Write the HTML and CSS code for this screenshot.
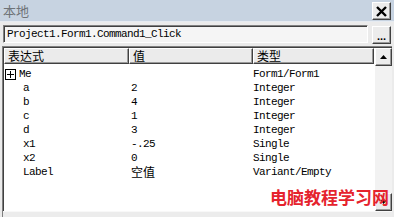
FILE: index.html
```html
<!DOCTYPE html>
<html>
<head>
<meta charset="utf-8">
<link rel="stylesheet" href="styles.css">
</head>
<body>
<div class="window">
  <div class="titlebar">
    <span class="title">本地</span>
    <span class="closebtn">
      <svg width="11" height="11" viewBox="0 0 11 11"><path d="M1 1 L10 10 M10 1 L1 10" stroke="#000" stroke-width="2.4" fill="none"/></svg>
    </span>
  </div>
  <div class="pathrow">
    <div class="pathbox mono">Project1.Form1.Command1_Click</div>
    <div class="dotbtn">...</div>
  </div>
  <div class="grid">
    <div class="gridmain">
      <div class="list">
        <div class="header">
          <div class="hcell c1">表达式</div>
          <div class="hcell c2">值</div>
          <div class="hcell c3">类型</div>
        </div>
        <div class="row mono">
          <div class="cell c1 top"><span class="plus"><svg width="11" height="11" viewBox="0 0 11 11"><rect x="0.5" y="0.5" width="10" height="10" fill="#fff" stroke="#000"/><path d="M2 5.5 H9 M5.5 2 V9" stroke="#000"/></svg></span>Me</div>
          <div class="cell c2"></div>
          <div class="cell c3">Form1/Form1</div>
        </div>
        <div class="row mono"><div class="cell c1 child">a</div><div class="cell c2">2</div><div class="cell c3">Integer</div></div>
        <div class="row mono"><div class="cell c1 child">b</div><div class="cell c2">4</div><div class="cell c3">Integer</div></div>
        <div class="row mono"><div class="cell c1 child">c</div><div class="cell c2">1</div><div class="cell c3">Integer</div></div>
        <div class="row mono"><div class="cell c1 child">d</div><div class="cell c2">3</div><div class="cell c3">Integer</div></div>
        <div class="row mono"><div class="cell c1 child">x1</div><div class="cell c2">-.25</div><div class="cell c3">Single</div></div>
        <div class="row mono"><div class="cell c1 child">x2</div><div class="cell c2">0</div><div class="cell c3">Single</div></div>
        <div class="row mono"><div class="cell c1 child">Label</div><div class="cell c2 cjk">空值</div><div class="cell c3">Variant/Empty</div></div>
      </div>
      <div class="vscroll">
        <div class="sbtn"><svg width="7" height="4" viewBox="0 0 7 4"><path d="M0 4 L3.5 0 L7 4 Z" fill="#000"/></svg></div>
        <div class="track"></div>
        <div class="sbtn"><svg width="7" height="4" viewBox="0 0 7 4"><path d="M0 0 L3.5 4 L7 0 Z" fill="#000"/></svg></div>
      </div>
    </div>
    <div class="hscroll"></div>
  </div>
  <div class="watermark">电脑教程学习网</div>
</div>
</body>
</html>
```
FILE: styles.css
```css
html, body {
  margin: 0;
  padding: 0;
}
body {
  width: 394px;
  height: 217px;
  overflow: hidden;
  background: #ebebeb;
  font-family: "Noto Sans CJK SC", sans-serif;
}
.window {
  position: relative;
  width: 394px;
  height: 217px;
  display: flex;
  flex-direction: column;
}
.mono {
  font-family: "Liberation Mono", monospace;
  font-size: 11px;
  letter-spacing: -0.6px;
}
.cjk {
  font-family: "Noto Sans CJK SC", sans-serif;
  font-size: 12px;
  line-height: 14px;
  letter-spacing: 0;
}
.titlebar {
  height: 21px;
  background: #c7d3e1;
  display: flex;
  align-items: center;
  justify-content: space-between;
  padding: 0 3px 0 3px;
  border-bottom: 1px solid #e6ebf1;
}
.title {
  font-size: 13px;
  color: #6f7378;
  line-height: 21px;
}
.closebtn {
  width: 17px;
  height: 16px;
  margin-top: 1px;
  background: #ececec;
  border-top: 1px solid #fff;
  border-left: 1px solid #fff;
  border-right: 1px solid #404040;
  border-bottom: 1px solid #404040;
  box-shadow: inset -1px -1px 0 #9a9a9a;
  display: flex;
  align-items: center;
  justify-content: center;
}
.pathrow {
  display: flex;
  gap: 4px;
  padding: 3px 3px 0 3px;
  height: 18px;
}
.pathbox {
  flex: 1;
  background: #f5f5f5;
  border-top: 1px solid #808080;
  border-left: 1px solid #808080;
  border-right: 1px solid #fff;
  border-bottom: 1px solid #fff;
  box-shadow: inset 1px 1px 0 #404040;
  padding-left: 3px;
  line-height: 16px;
  color: #000;
}
.dotbtn {
  width: 17px;
  height: 16px;
  margin-top: 1px;
  background: #ececec;
  border-top: 1px solid #fff;
  border-left: 1px solid #fff;
  border-right: 1px solid #404040;
  border-bottom: 1px solid #404040;
  box-shadow: inset -1px -1px 0 #9a9a9a;
  font-family: "Liberation Sans", sans-serif;
  font-size: 11px;
  font-weight: bold;
  text-align: center;
  line-height: 18px;
}
.grid {
  margin: 3px 2px 0 2px;
  flex: 1;
  display: flex;
  flex-direction: column;
  border-top: 1px solid #808080;
  border-left: 1px solid #808080;
  box-shadow: inset 1px 1px 0 #404040;
  background: #fff;
}
.gridmain {
  flex: 1;
  display: flex;
  padding: 1px 0 0 1px;
}
.list {
  flex: 1;
  display: flex;
  flex-direction: column;
  background: #fff;
}
.header {
  display: flex;
  height: 16px;
}
.hcell {
  font-size: 12px;
  line-height: 14px;
  background: #ebebeb;
  border-top: 1px solid #fff;
  border-left: 1px solid #fff;
  border-right: 1px solid #404040;
  border-bottom: 1px solid #404040;
  box-shadow: inset -1px -1px 0 #9a9a9a;
  padding-left: 3px;
  box-sizing: border-box;
  height: 16px;
}
.c1 { width: 125px; }
.c2 { width: 124px; }
.c3 { width: 121px; }
.row {
  display: flex;
  height: 14px;
  line-height: 14px;
  color: #000;
}
.row:nth-child(2) {
  margin-top: 3px;
}
.cell {
  box-sizing: border-box;
  white-space: nowrap;
  display: flex;
  align-items: center;
}
.cell.c1.top { padding-left: 1px; }
.cell.c1.child { padding-left: 19px; }
.cell.c2 { padding-left: 2px; }
.cell.c3 { padding-left: 0; }
.plus {
  display: inline-flex;
  width: 11px;
  height: 11px;
  margin-right: 3px;
}
.vscroll {
  width: 17px;
  display: flex;
  flex-direction: column;
  background: #ececec;
}
.sbtn {
  height: 16px;
  background: #ececec;
  border-top: 1px solid #fff;
  border-left: 1px solid #fff;
  border-right: 1px solid #404040;
  border-bottom: 1px solid #404040;
  box-shadow: inset -1px -1px 0 #9a9a9a;
  display: flex;
  align-items: center;
  justify-content: center;
}
.track {
  flex: 1;
  background: #f2f2f2;
}
.hscroll {
  height: 5px;
  background: #ececec;
  border-top: 1px solid #f8f8f8;
}
.watermark {
  position: absolute;
  right: 5px;
  bottom: 11px;
  font-family: "Noto Sans CJK SC", sans-serif;
  font-weight: bold;
  font-size: 17px;
  line-height: 18px;
  color: #e5232d;
  letter-spacing: 0;
}
```
